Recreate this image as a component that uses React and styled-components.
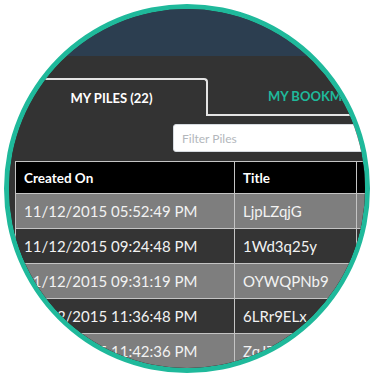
import React from 'react';
import styled, { createGlobalStyle } from 'styled-components';

const Global = createGlobalStyle`
  html, body { margin: 0; padding: 0; background: #ffffff; }
  body { font-family: Lato, "Open Sans", "Liberation Sans", sans-serif; }
  * { box-sizing: border-box; }
`;

const Page = styled.div`
  width: 380px;
  height: 380px;
  background: #ffffff;
  padding: 4px 0 0 4px;
`;

const Lens = styled.div`
  width: 366px;
  height: 369px;
  border: 5px solid #1fb99b;
  border-radius: 50%;
  overflow: hidden;
  background: #333333;
  display: flex;
  flex-direction: column;
`;

const TopBar = styled.div`
  flex: none;
  height: 47px;
  background: #2c3e50;
`;

const Body = styled.div`
  flex: 1;
  background: #333333;
  padding: 22px 0 0 6px;
`;

const Content = styled.div`
  width: 520px;
  display: flex;
  flex-direction: column;
`;

const Tabs = styled.div`
  display: flex;
  height: 38px;
`;

const Tab = styled.div`
  display: flex;
  align-items: center;
  font-size: 13px;
  font-weight: 700;
  text-transform: uppercase;
  white-space: nowrap;
  ${(p) =>
    p.$active
      ? `
    width: 193px;
    justify-content: center;
    color: #ffffff;
    border-top: 2px solid #e4e4e4;
    border-right: 2px solid #e4e4e4;
    border-left: 2px solid #e4e4e4;
    border-top-right-radius: 4px;
    border-top-left-radius: 4px;
  `
      : `
    flex: 1;
    padding-left: 60px;
    color: #1fb99b;
    border-bottom: 2px solid #e4e4e4;
  `}
`;

const FilterRow = styled.div`
  display: flex;
  padding: 8px 0 9px 158px;
`;

const Filter = styled.input`
  width: 330px;
  height: 28px;
  border: 1px solid #d6dbe0;
  border-radius: 3px;
  background: #ffffff;
  padding: 0 8px;
  font-family: Lato, "Open Sans", sans-serif;
  font-size: 12px;
  color: #333;
  outline: none;
  &::placeholder { color: #b3b7bc; }
`;

const Table = styled.table`
  border-collapse: collapse;
  width: 510px;
  table-layout: fixed;
  border: 1px solid #bdbdbd;
`;

const Th = styled.th`
  background: #000000;
  color: #ffffff;
  font-weight: 700;
  font-size: 13.5px;
  text-align: left;
  height: 32px;
  padding: 0 8px;
  border: 1px solid #c4c4c4;
  white-space: nowrap;
  overflow: hidden;
`;

const Tr = styled.tr`
  background: ${(p) => (p.$alt ? '#7e7e7e' : '#343434')};
`;

const Td = styled.td`
  color: #f2f2f2;
  font-size: 15px;
  height: 35px;
  padding: 0 8px;
  border: 1px solid #c4c4c4;
  white-space: nowrap;
  overflow: hidden;
`;

const rows = [
  ['11/12/2015 05:52:49 PM', 'LjpLZqjG', 'jaXbT'],
  ['11/12/2015 09:24:48 PM', '1Wd3q25y', 'kPq2m'],
  ['11/12/2015 09:31:19 PM', 'OYWQPNb9', 'rT8vA'],
  ['11/12/2015 11:36:48 PM', '6LRr9ELx', 'hW3zQ'],
  ['11/12/2015 11:42:36 PM', 'ZqJZz7Pk', 'mN5bX'],
];

export default function App() {
  return (
    <>
      <Global />
      <Page>
        <Lens>
          <TopBar />
          <Body>
            <Content>
              <Tabs>
                <Tab $active>My Piles (22)</Tab>
                <Tab>My Bookmarks (4)</Tab>
              </Tabs>
              <FilterRow>
                <Filter placeholder="Filter Piles" />
              </FilterRow>
              <Table>
                <colgroup>
                  <col style={{ width: 219 }} />
                  <col style={{ width: 122 }} />
                  <col style={{ width: 169 }} />
                </colgroup>
                <thead>
                  <tr>
                    <Th>Created On</Th>
                    <Th>Title</Th>
                    <Th>Link</Th>
                  </tr>
                </thead>
                <tbody>
                  {rows.map((r, i) => (
                    <Tr key={i} $alt={i % 2 === 0}>
                      <Td>{r[0]}</Td>
                      <Td>{r[1]}</Td>
                      <Td>{r[2]}</Td>
                    </Tr>
                  ))}
                </tbody>
              </Table>
            </Content>
          </Body>
        </Lens>
      </Page>
    </>
  );
}
